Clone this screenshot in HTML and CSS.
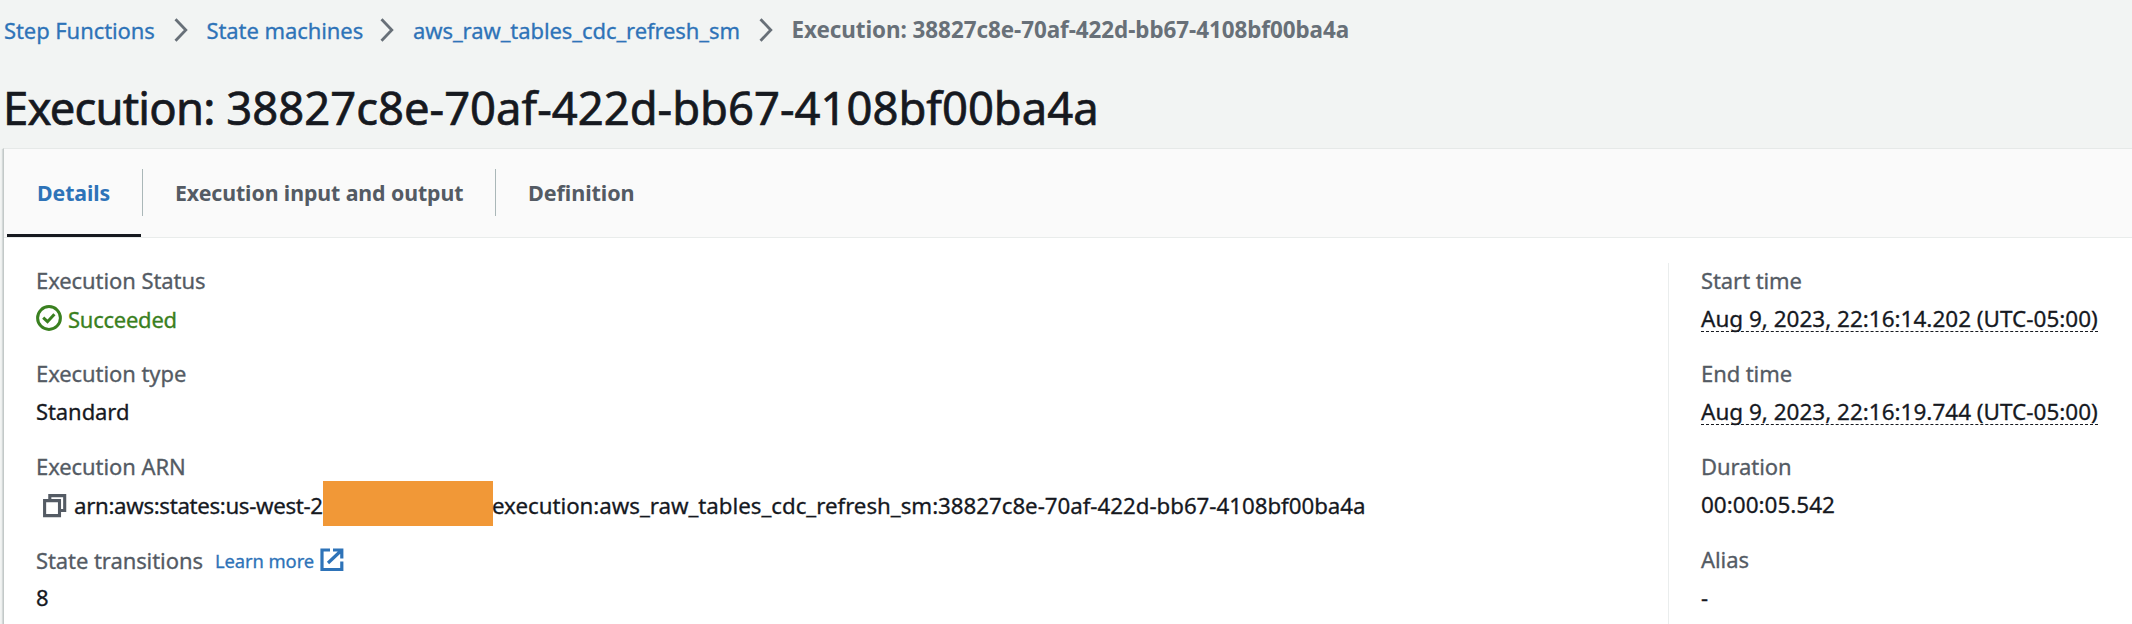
FILE: index.html
```html
<!DOCTYPE html>
<html lang="en">
<head>
<meta charset="utf-8">
<title>Execution details - Step Functions</title>
<link rel="stylesheet" href="styles.css">
</head>
<body>
<nav class="breadcrumbs">
  <a class="crumb crumb-root">Step Functions</a>
  <svg class="chevron" viewBox="0 0 14 24"><path d="M1.5 1.2 11.8 12 1.5 22.8"/></svg>
  <a class="crumb crumb-list">State machines</a>
  <svg class="chevron" viewBox="0 0 14 24"><path d="M1.5 1.2 11.8 12 1.5 22.8"/></svg>
  <a class="crumb crumb-machine">aws_raw_tables_cdc_refresh_sm</a>
  <svg class="chevron" viewBox="0 0 14 24"><path d="M1.5 1.2 11.8 12 1.5 22.8"/></svg>
  <span class="crumb-current">Execution: 38827c8e-70af-422d-bb67-4108bf00ba4a</span>
</nav>
<h1 class="title"><span class="title-prefix">Execution:</span> 38827c8e-70af-422d-bb67-4108bf00ba4a</h1>
<main class="panel">
  <div class="tabs">
    <div class="tab tab-active">Details</div>
    <div class="tab tab-io">Execution input and output</div>
    <div class="tab tab-definition">Definition</div>
  </div>
  <div class="columns">
    <dl class="column column-main">
      <div class="field"><dt class="label">Execution Status</dt>
        <dd class="value status"><svg class="icon-check" viewBox="0 0 26 26"><circle cx="13" cy="13" r="11.4"/><path d="M7.2 12.7 11.5 16.7 18.4 9.3"/></svg>Succeeded</dd></div>
      <div class="field"><dt class="label">Execution type</dt><dd class="value">Standard</dd></div>
      <div class="field"><dt class="label">Execution ARN</dt>
        <dd class="value arn"><svg class="icon-copy" viewBox="0 0 24 24"><path d="M6.8 6V1.6H21.7V16.5H17.5"/><path d="M1.6 6.6H16.5V21.6H1.6Z"/></svg><span class="arn-start">arn:aws:states:us-west-2</span><span class="redaction"></span><span class="arn-end">execution:aws_raw_tables_cdc_refresh_sm:38827c8e-70af-422d-bb67-4108bf00ba4a</span></dd></div>
      <div class="field"><dt class="label label-row">State transitions<a class="learn-more">Learn more</a><svg class="icon-external" viewBox="0 0 24 24"><path d="M10 2H2V21.5H21.8V13.5M13 2H21.8V10.5M21.8 2 8 15"/></svg></dt><dd class="value">8</dd></div>
    </dl>
    <dl class="column column-side">
      <div class="field"><dt class="label">Start time</dt><dd class="value"><span class="timestamp">Aug 9, 2023, 22:16:14.202 (UTC-05:00)</span></dd></div>
      <div class="field"><dt class="label">End time</dt><dd class="value"><span class="timestamp">Aug 9, 2023, 22:16:19.744 (UTC-05:00)</span></dd></div>
      <div class="field"><dt class="label">Duration</dt><dd class="value duration">00:00:05.542</dd></div>
      <div class="field"><dt class="label">Alias</dt><dd class="value">-</dd></div>
    </dl>
  </div>
</main>
</body>
</html>
```
FILE: styles.css
```css
* { box-sizing: border-box; }
body {
  margin: 0;
  height: 624px;
  overflow: hidden;
  display: flex;
  flex-direction: column;
  background: #f2f4f3;
  color: #16191f;
  font-family: "Noto Sans", "Open Sans", sans-serif;
  font-size: 22px;
  letter-spacing: -0.08px;
  -webkit-text-stroke: 0.3px currentColor;
}
svg { flex: none; fill: none; stroke: currentColor; }

.breadcrumbs {
  flex: none;
  display: flex;
  align-items: center;
  height: 59px;
  padding-left: 4px;
  white-space: nowrap;
  color: #687078;
}
.crumb { color: #2e73b8; }
.crumb-root { width: 151px; }
.crumb-list { width: 155px; }
.crumb-machine { width: 327px; }
.crumb-current { font-weight: 700; font-size: 22.43px; letter-spacing: -0.06px; -webkit-text-stroke: 0; }
.chevron { width: 14px; height: 24px; margin: 0 19px 0 18.5px; stroke-width: 2.8; }

.title {
  flex: none;
  margin: 0;
  height: 89px;
  padding-left: 3px;
  font-size: 45.4px;
  font-weight: 400;
  line-height: 96px;
  letter-spacing: 0;
  white-space: nowrap;
  -webkit-text-stroke: 0.7px currentColor;
}
.title-prefix { letter-spacing: -0.8px; }

.panel {
  flex: 1;
  min-height: 0;
  margin-left: 3px;
  border-left: 1px solid #c3c9c8;
  border-top: 1px solid #e6e9e8;
  background: #fff;
  box-shadow: -1px 1px 1px rgba(0, 28, 36, 0.12);
}
.tabs {
  display: flex;
  height: 89px;
  padding-left: 3px;
  background: #fafafa;
  border-bottom: 1px solid #e9eceb;
}
.tab {
  position: relative;
  display: flex;
  align-items: center;
  height: 88px;
  padding-left: 32px;
  padding-bottom: 2px;
  color: #545b64;
  font-size: 21.3px;
  font-weight: 700;
  white-space: nowrap;
  -webkit-text-stroke: 0;
}
.tab-active { width: 134px; padding: 1px 0 0 30px; color: #2e73b8; border-bottom: 3px solid #16191f; }
.tab-io { width: 353px; margin-left: 2px; }
.tab-definition { font-size: 21.6px; }
.tab-io::before, .tab-definition::before {
  content: "";
  position: absolute;
  left: -1px;
  top: 20px;
  width: 1px;
  height: 47px;
  background: #aab7b8;
}

.columns { display: flex; padding-top: 25px; height: 400px; }
.column { margin: 0; display: flex; flex-direction: column; gap: 17px; white-space: nowrap; }
.column-main { width: 1664px; padding-left: 32px; }
.column-side { padding-left: 32px; border-left: 1px solid #eaeded; }
.label { height: 36px; line-height: 34px; color: #545b64; }
.value { margin: 0; height: 40px; line-height: 39px; }
.status { display: flex; align-items: center; gap: 6px; color: #3a8020; letter-spacing: -0.25px; }
.icon-check { width: 26px; height: 26px; margin-top: -2px; stroke-width: 3; }
.arn { display: flex; align-items: center; padding-left: 7px; font-size: 22.3px; }
.icon-copy { width: 24px; height: 24px; margin-right: 7px; margin-top: 1px; color: #545b64; stroke-width: 3.1; }
.arn-start { width: 249px; letter-spacing: -0.35px; }
.redaction { width: 170px; height: 45px; margin-top: -3px; background: #f19837; }
.arn-end { margin-left: -1px; letter-spacing: -0.03px; }
.label-row { display: flex; align-items: center; }
.learn-more { margin: 1px 6px 0 12px; color: #2e73b8; font-size: 18.4px; }
.icon-external { width: 24px; height: 24px; margin-top: 0; color: #2e73b8; stroke-width: 3.2; }
.timestamp { display: inline-block; line-height: 29px; height: 28px; border-bottom: 1px dashed #16191f; font-size: 22.5px; letter-spacing: 0; }
.duration { font-size: 22.5px; letter-spacing: 0; }
```
